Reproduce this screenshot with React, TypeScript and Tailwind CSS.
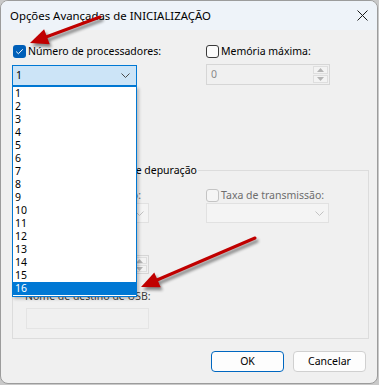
import React from "react";

function Box({ kind }: { kind: "checked" | "empty" | "disabled" }) {
  if (kind === "checked") {
    return (
      <div className="w-[13px] h-[13px] shrink-0 rounded-[3px] bg-[#005fb8] flex items-center justify-center">
        <svg width="9" height="7" viewBox="0 0 9 7">
          <path d="M1.2 3.6 L3.4 5.7 L7.8 1.3" stroke="white" strokeWidth="1" fill="none" />
        </svg>
      </div>
    );
  }
  if (kind === "disabled") {
    return <div className="w-[13px] h-[13px] shrink-0 rounded-[3px] border border-[#c4c4c4] bg-[#f5f5f5]" />;
  }
  return <div className="w-[13px] h-[13px] shrink-0 rounded-[3px] border border-[#3a3a3a] bg-[#fbfbfb]" />;
}

function Chevron({ color }: { color: string }) {
  return (
    <svg width="9" height="5" viewBox="0 0 9 5">
      <path d="M0.5 0.5 L4.5 4.5 L8.5 0.5" stroke={color} strokeWidth="1" fill="none" />
    </svg>
  );
}

function SpinButtons() {
  return (
    <div className="flex flex-col w-[16px] h-full py-[1px] pr-[1px] gap-[1px]">
      <div className="flex-1 border border-[#dedede] bg-[#f3f3f3] flex items-center justify-center">
        <svg width="7" height="4" viewBox="0 0 7 4">
          <path d="M0 4 L3.5 0 L7 4 Z" fill="#b4b4b4" />
        </svg>
      </div>
      <div className="flex-1 border border-[#dedede] bg-[#f3f3f3] flex items-center justify-center">
        <svg width="7" height="4" viewBox="0 0 7 4">
          <path d="M0 0 L3.5 4 L7 0 Z" fill="#b4b4b4" />
        </svg>
      </div>
    </div>
  );
}

export default function App() {
  const items = Array.from({ length: 16 }, (_, i) => String(i + 1));
  return (
    <div className="relative w-[379px] h-[385px] bg-[#c9c9c9] overflow-hidden font-['Noto_Sans',sans-serif] text-black">
      <div className="w-[378px] h-[384px] rounded-[8px] border border-[#9c9c9c] bg-[#f0f0f0] flex flex-col overflow-hidden">
        {/* title bar */}
        <div className="h-[29px] shrink-0 bg-[#eef3f9] flex items-center justify-between pl-[9px] pr-[9px]">
          <span className="text-[11.4px] leading-[16px] whitespace-nowrap">Opções Avançadas de INICIALIZAÇÃO</span>
          <svg width="11" height="11" viewBox="0 0 11 11">
            <path d="M0.5 0.5 L10.5 10.5 M10.5 0.5 L0.5 10.5" stroke="#1a1a1a" strokeWidth="1" />
          </svg>
        </div>

        {/* content */}
        <div className="flex flex-col px-[11px] text-[10.5px] leading-[13px] whitespace-nowrap">
          <div className="grid grid-cols-[125px_124px] gap-x-[69px] mt-[15px]">
            <div className="flex items-center gap-[2px] ml-[1px] h-[13px]">
              <Box kind="checked" />
              <span>Número de processadores:</span>
            </div>
            <div className="flex items-center gap-[2px] h-[13px]">
              <Box kind="empty" />
              <span>Memória máxima:</span>
            </div>

            <div className="mt-[7px] h-[21px] border border-[#0078d4] bg-[#cce4f7] flex items-center justify-between pl-[3px] pr-[6px]">
              <span>1</span>
              <Chevron color="#4a4a4a" />
            </div>
            <div className="mt-[6px] h-[21px] border border-[#d6d6d6] bg-[#f0f0f0] flex items-center justify-between pl-[4px]">
              <span className="text-[#8a8a8a]">0</span>
              <SpinButtons />
            </div>
          </div>

          {/* hidden under the open list */}
          <div className="flex items-center gap-[2px] ml-[1px] mt-[24px] h-[13px]">
            <Box kind="empty" />
            <span>Bloqueio PCI</span>
          </div>
          <div className="flex items-center gap-[2px] ml-[1px] mt-[12px] h-[13px]">
            <Box kind="empty" />
            <span>Depurar</span>
          </div>

          {/* group box */}
          <fieldset className="mt-[15px] w-[357px] border border-[#dcdcdc] px-[13px] pb-[9px]">
            <legend className="-ml-[10px] px-[1px] leading-[14px]">Configurações globais de depuração</legend>
            <div className="grid grid-cols-[123px_123px] gap-x-[57px] mt-[12px]">
              <div className="flex items-center gap-[2px] h-[13px]">
                <Box kind="disabled" />
                <span className="text-[#6d6d6d]">Porta de depuração:</span>
              </div>
              <div className="flex items-center gap-[2px] h-[13px]">
                <Box kind="disabled" />
                <span className="text-[#6d6d6d]">Taxa de transmissão:</span>
              </div>
              <div className="mt-[1px] h-[20px] border border-[#e1e1e1] bg-[#f4f4f4] flex items-center justify-end pr-[4px]">
                <Chevron color="#c2c2c2" />
              </div>
              <div className="mt-[1px] h-[20px] border border-[#e1e1e1] bg-[#f4f4f4] flex items-center justify-end pr-[4px]">
                <Chevron color="#c2c2c2" />
              </div>
            </div>
            <div className="flex flex-col w-[123px]">
              <span className="mt-[15px] text-[#6d6d6d]">Canal:</span>
              <div className="mt-[4px] h-[19px] border border-[#d6d6d6] bg-[#f0f0f0] flex items-center justify-end">
                <SpinButtons />
              </div>
              <span className="mt-[16px] -ml-[1px] text-[#3c3c3c]">Nome de destino de USB:</span>
              <div className="mt-[5px] h-[21px] border border-[#e4e4e4] bg-[#f0f0f0]" />
            </div>
          </fieldset>

          {/* buttons */}
          <div className="flex justify-end gap-[9px] mt-[12px]">
            <div className="w-[73px] h-[21px] rounded-[4px] border border-[#0067c0] bg-[#fdfdfd] flex items-center justify-center">OK</div>
            <div className="w-[73px] h-[21px] rounded-[4px] border border-[#d0d0d0] bg-[#fdfdfd] flex items-center justify-center">Cancelar</div>
          </div>
        </div>
      </div>

      {/* open dropdown list */}
      <div className="absolute left-[12px] top-[86px] w-[125px] h-[211px] border border-[#0078d4] bg-white flex flex-col text-[10.5px] leading-[13px] shadow-[2px_2px_3px_rgba(0,0,0,0.22)] font-['Noto_Sans',sans-serif]">
        {items.map((n) => (
          <div
            key={n}
            className={n === "16" ? "h-[13px] pl-[2px] bg-[#0078d4] text-white" : "h-[13px] pl-[2px] text-black"}
          >
            {n}
          </div>
        ))}
      </div>

      {/* annotation arrows */}
      <svg className="absolute left-0 top-0 pointer-events-none" width="379" height="385" viewBox="0 0 379 385">
        <defs>
          <filter id="blur" x="-20%" y="-20%" width="140%" height="140%">
            <feGaussianBlur stdDeviation="1.6" />
          </filter>
        </defs>
        <g transform="translate(2 3)" filter="url(#blur)" opacity="0.45">
          <line x1="100" y1="17" x2="46" y2="37" stroke="#000" strokeWidth="3.2" strokeLinecap="round" />
          <polygon points="30,43 44.1,29.2 49.7,44.2" fill="#000" />
          <line x1="255" y1="238" x2="157" y2="280" stroke="#000" strokeWidth="3.2" strokeLinecap="round" />
          <polygon points="141,287 154.3,272.5 160.7,287.3" fill="#000" />
        </g>
        <line x1="100" y1="17" x2="46" y2="37" stroke="#c00000" strokeWidth="3" strokeLinecap="round" />
        <polygon points="30,43 44.1,29.2 49.7,44.2" fill="#c00000" />
        <line x1="255" y1="238" x2="157" y2="280" stroke="#c00000" strokeWidth="3" strokeLinecap="round" />
        <polygon points="141,287 154.3,272.5 160.7,287.3" fill="#c00000" />
      </svg>
    </div>
  );
}
